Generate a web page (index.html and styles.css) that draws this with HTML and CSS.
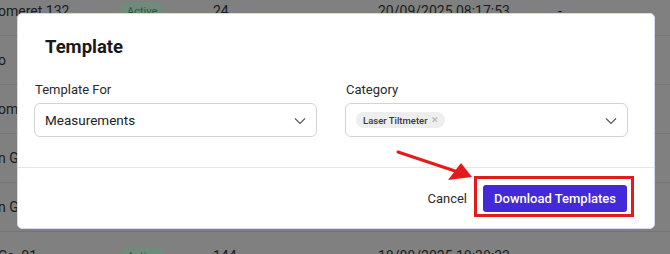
FILE: index.html
```html
<!DOCTYPE html>
<html>
<head>
<meta charset="utf-8">
<link rel="stylesheet" href="styles.css">
</head>
<body>
<div class="table">
  <div class="row">
    <span class="c1">omeret 132</span><span class="c2"><span class="badge">Active</span></span><span class="c3">24</span><span class="c4">20/09/2025 08:17:53</span><span class="c5">-</span>
  </div>
  <div class="row"><span class="c1">o</span></div>
  <div class="row"><span class="c1">ome</span></div>
  <div class="row"><span class="c1">n G</span></div>
  <div class="row"><span class="c1">n G</span></div>
  <div class="row">
    <span class="c1">Cs &nbsp;01</span><span class="c2"><span class="badge">Active</span></span><span class="c3">144</span><span class="c4">18/09/2025 18:38:33</span><span class="c5">-</span>
  </div>
</div>

<div class="modal">
  <div class="modal-header">
    <h2 class="title">Template</h2>
  </div>
  <div class="modal-body">
    <div class="field">
      <label class="label">Template For</label>
      <div class="select">
        <span class="value">Measurements</span>
        <svg class="chev" width="12" height="8" viewBox="0 0 12 8"><path d="M1 1.5 L6 6.5 L11 1.5" fill="none" stroke="#555" stroke-width="1.1"/></svg>
      </div>
    </div>
    <div class="field">
      <label class="label">Category</label>
      <div class="select">
        <span class="chip">Laser Tiltmeter <span class="x">✕</span></span>
        <svg class="chev" width="12" height="8" viewBox="0 0 12 8"><path d="M1 1.5 L6 6.5 L11 1.5" fill="none" stroke="#555" stroke-width="1.1"/></svg>
      </div>
    </div>
  </div>
  <div class="modal-footer">
    <button class="btn-cancel">Cancel</button>
    <button class="btn-primary">Download Templates</button>
  </div>
</div>

<div class="highlight"></div>
<svg class="arrow" width="670" height="254" viewBox="0 0 670 254">
  <line x1="398" y1="152" x2="458" y2="172" stroke="#e31b1b" stroke-width="3" stroke-linecap="round"/>
  <polygon points="472,177 448,180 461,163" fill="#e31b1b"/>
</svg>
</body>
</html>
```

FILE: styles.css
```css
* { box-sizing: border-box; }
html, body {
  margin: 0;
  padding: 0;
  width: 670px;
  height: 254px;
  overflow: hidden;
}
body {
  background: #808080;
  font-family: Roboto, "Liberation Sans", sans-serif;
  position: relative;
}
.table {
  margin-top: -13px;
}
.row {
  height: 49px;
  border-bottom: 1px solid #747474;
  display: flex;
  align-items: center;
  font-size: 14px;
  color: #1c1c1c;
}
.c1 { width: 121px; margin-left: -2px; white-space: nowrap; }
.c2 { width: 94px; }
.c3 { width: 165px; }
.c4 { width: 180px; }
.c5 { width: 40px; }
.badge {
  display: inline-block;
  background: #6f8b7b;
  color: #2e5a44;
  font-size: 11px;
  padding: 3px 8px;
  border-radius: 10px;
}

.modal {
  position: absolute;
  left: 17px;
  top: 13px;
  width: 638px;
  height: 216px;
  background: #fff;
  border-radius: 5px;
  border: 1px solid #d5d8f2;
  display: flex;
  flex-direction: column;
}
.modal-header {
  padding: 21px 27px 0 27px;
}
.title {
  margin: 0;
  font-size: 18.5px;
  font-weight: 700;
  line-height: 24px;
  color: #1a1a1a;
}
.modal-body {
  display: grid;
  grid-template-columns: 283px 283px;
  column-gap: 28px;
  padding: 22px 27px 30px 16px;
  border-bottom: 1px solid #e1e6f6;
}
.field {
  display: flex;
  flex-direction: column;
}
.label {
  font-size: 13px;
  line-height: 18px;
  color: #2a2a2a;
  margin-bottom: 4px;
  padding-left: 1px;
}
.select {
  height: 34px;
  border: 1px solid #d3d3d3;
  border-radius: 6px;
  display: flex;
  align-items: center;
  justify-content: space-between;
  padding: 0 10px 0 10px;
}
.value {
  font-size: 13.5px;
  color: #222;
}
.chev { margin-top: 1px; }
.chip {
  display: inline-flex;
  align-items: center;
  gap: 3px;
  background: #eeeeee;
  border-radius: 8px;
  height: 16px;
  padding: 0 6px 0 7px;
  font-size: 9.5px;
  font-weight: 500;
  color: #3a3a3a;
}
.chip .x {
  color: #a8a8a8;
  font-size: 9px;
}
.modal-footer {
  flex: 1;
  display: flex;
  align-items: center;
  justify-content: flex-end;
  gap: 16px;
  padding: 0 27px 0 0;
}
.btn-cancel {
  background: none;
  border: none;
  font-family: inherit;
  font-size: 13px;
  color: #2a2a2a;
  padding: 0;
}
.btn-primary {
  height: 27px;
  width: 144px;
  background: #4329d8;
  border: none;
  border-radius: 3px;
  color: #fff;
  font-family: inherit;
  font-size: 13px;
  font-weight: 500;
  padding: 0;
}
.highlight {
  position: absolute;
  left: 474px;
  top: 176px;
  width: 160px;
  height: 41px;
  border: 3px solid #e21b1b;
}
.arrow {
  position: absolute;
  left: 0;
  top: 0;
}
```
